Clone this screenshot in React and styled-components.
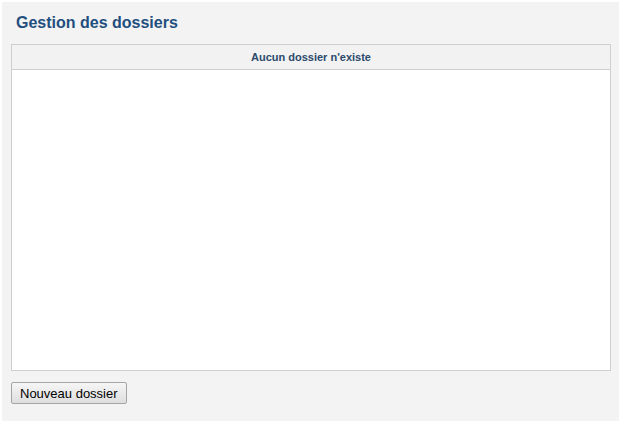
import React from "react";
import styled, { createGlobalStyle } from "styled-components";

const GlobalStyle = createGlobalStyle`
  html, body {
    margin: 0;
    padding: 0;
    background: #ffffff;
    font-family: "Liberation Sans", Arial, sans-serif;
  }
`;

const Page = styled.div`
  padding: 2px 3px 3px 2px;
`;

const Panel = styled.section`
  background-color: #f3f3f3;
  height: 419px;
  box-sizing: border-box;
  padding: 12px 8px 0 9px;
  display: flex;
  flex-direction: column;
`;

const Title = styled.h1`
  margin: 0 0 12px 5px;
  font-size: 16px;
  line-height: 18px;
  font-weight: 700;
  color: #1f4f7f;
`;

const FolderTable = styled.div`
  background-color: #ffffff;
  border: 1px solid #cfcfcf;
  height: 327px;
  box-sizing: border-box;
  display: flex;
  flex-direction: column;
`;

const HeaderRow = styled.div`
  height: 25px;
  box-sizing: border-box;
  background-color: #f2f2f2;
  border-bottom: 1px solid #cfcfcf;
  display: flex;
  align-items: center;
  justify-content: center;
  font-size: 11px;
  font-weight: 700;
  color: #2b4a6c;
`;

const Body = styled.div`
  flex: 1;
`;

const Actions = styled.div`
  padding-top: 11px;
`;

const Button = styled.button`
  font-family: "Liberation Sans", Arial, sans-serif;
  font-size: 13px;
  color: #000000;
  height: 22px;
  padding: 0 8px;
  border: 1px solid #a5a5a5;
  border-radius: 2px;
  background: linear-gradient(#f6f6f6, #dedede);
  cursor: pointer;
`;

export default function App() {
  return (
    <>
      <GlobalStyle />
      <Page>
        <Panel>
          <Title>Gestion des dossiers</Title>
          <FolderTable>
            <HeaderRow>Aucun dossier n'existe</HeaderRow>
            <Body />
          </FolderTable>
          <Actions>
            <Button type="button">Nouveau dossier</Button>
          </Actions>
        </Panel>
      </Page>
    </>
  );
}
